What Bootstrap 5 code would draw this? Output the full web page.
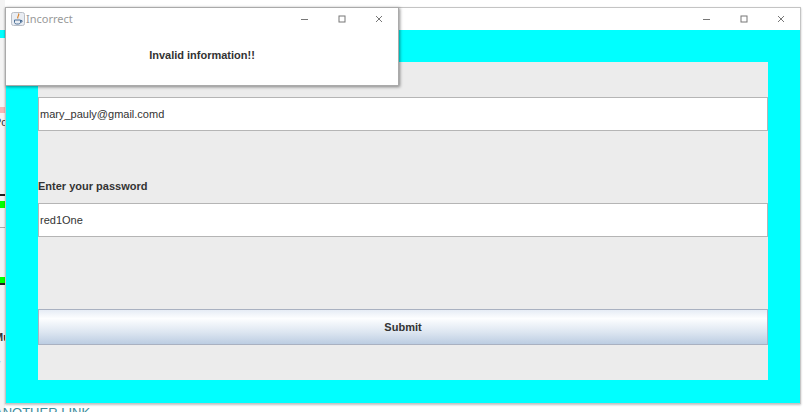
<!DOCTYPE html>
<html lang="en">
<head>
    <meta charset="UTF-8">
    <meta name="viewport" content="width=device-width, initial-scale=1.0">
    <title>Incorrect</title>
    <link rel="stylesheet" href="https://cdn.jsdelivr.net/npm/bootstrap@5.3.0/dist/css/bootstrap.min.css">
    <style>
        html, body {
            height: 412px;
            overflow: hidden;
        }
        body {
            position: relative;
            background: #fff;
            font-family: "Liberation Sans", Arial, sans-serif;
            color: #333;
        }
        /* bits of the page behind the windows */
        .behind {
            width: 5px;
            height: 412px;
            background: #f4f4f4;
        }
        .behind div { position: absolute; left: 0; width: 5px; }
        .behind .cyan { top: 30px; height: 8px; background: #0ff; }
        .behind .pink { top: 107px; height: 6px; background: #f5b5b5; }
        .behind .black { height: 2px; background: #222; }
        .behind .green { height: 7px; background: #0f0; }
        .behind .grey { height: 1px; background: #aaa; }
        .behind-text {
            position: absolute;
            left: -6px;
            font-size: 11px;
            line-height: 14px;
            white-space: nowrap;
        }
        .other-link {
            position: absolute;
            left: -6px;
            top: 405px;
            font-size: 13px;
            line-height: 15px;
            color: #3a8a9a;
            white-space: nowrap;
        }
        .win {
            position: absolute;
            background: #fff;
            border: 1px solid #c4c4c4;
            box-shadow: 0 1px 2px rgba(0, 0, 0, .25);
        }
        .win-main {
            left: 5px;
            top: 7px;
            width: 796px;
            height: 397px;
        }
        .win-dialog {
            left: 5px;
            top: 7px;
            width: 394px;
            height: 79px;
            border-color: #aaa;
            box-shadow: 1px 1px 3px rgba(0, 0, 0, .45);
        }
        .titlebar {
            height: 22px;
        }
        .win-title {
            font-family: "Noto Sans", sans-serif;
            font-size: 11px;
            color: #999;
            margin-left: 1px;
        }
        .win-btns svg {
            display: block;
            width: 8px;
            height: 8px;
            stroke: #777;
            fill: none;
        }
        .win-btns { gap: 29px; }
        .win-main .win-btns { padding-right: 15px; }
        .win-dialog .win-btns { padding-right: 15px; }
        .java-icon {
            width: 14px;
            height: 14px;
            margin-left: 5px;
        }
        .cyan-area {
            height: 373px;
            background: #0ff;
            padding: 32px 32px 23px;
        }
        .panel {
            height: 318px;
            background: #ececec;
            padding-top: 35px;
        }
        .field {
            height: 34px;
            margin-right: 1px;
            background: #fff;
            border: 1px solid #b5b5b5;
            border-radius: 0;
            padding: 0 1px;
            font-size: 11px;
            color: #333;
            box-shadow: none;
        }
        .pw-label {
            margin-top: 49px;
            margin-bottom: 10px;
            font-size: 11px;
            font-weight: 700;
            line-height: 13px;
            color: #333;
        }
        .submit {
            width: 100%;
            height: 36px;
            margin-top: 72px;
            padding: 0;
            border: 1px solid #a9b1c1;
            border-radius: 0;
            font-size: 11px;
            font-weight: 700;
            color: #333;
            background: linear-gradient(#e6ecf5, #fdfeff 25%, #dde6f1 65%, #bccde2);
        }
        .msg {
            font-size: 11px;
            font-weight: 700;
            color: #333;
            padding-top: 17px;
        }
    </style>
</head>
<body>
    <div class="behind">
        <div class="cyan"></div>
        <div class="pink"></div>
        <div class="black" style="top:194px"></div>
        <div class="green" style="top:201px"></div>
        <div class="grey" style="top:227px"></div>
        <div class="green" style="top:277px"></div>
        <div class="black" style="top:283px"></div>
    </div>
    <div class="behind-text" style="top:115px">Pol</div>
    <div class="behind-text fw-bold" style="top:330px">Mu</div>
    <div class="behind-text" style="top:358px">//</div>
    <div class="other-link">ANOTHER LINK</div>

    <div class="win win-main">
        <div class="titlebar d-flex align-items-center justify-content-end">
            <div class="win-btns d-flex">
                <svg viewBox="0 0 8 8"><path d="M0 4.5h7"/></svg>
                <svg viewBox="0 0 8 8"><rect x="1" y="1" width="6" height="6"/></svg>
                <svg viewBox="0 0 8 8"><path d="M1 1l6 6M7 1l-6 6"/></svg>
            </div>
        </div>
        <div class="cyan-area">
            <div class="panel">
                <input class="form-control field" type="text" value="mary_pauly@gmail.comd">
                <div class="pw-label">Enter your password</div>
                <input class="form-control field" type="text" value="red1One">
                <button class="btn submit" type="button">Submit</button>
            </div>
        </div>
    </div>

    <div class="win win-dialog">
        <div class="titlebar d-flex align-items-center justify-content-between">
            <div class="d-flex align-items-center">
                <svg class="java-icon" viewBox="0 0 14 14">
                    <rect x=".5" y=".5" width="13" height="13" rx="2" fill="#e9edf3" stroke="#b9bec6"/>
                    <path d="M7.5 1.5c1.5 2-2 3-.5 5" fill="none" stroke="#d9822b" stroke-width="1.2"/>
                    <path d="M3.5 8h6v2.500a2 2 0 0 1-2 1.500h-2a2 2 0 0 1-2-1.500zM9.500 8.500h1.500v1.500h-1.500" fill="none" stroke="#4a6f96"/>
                </svg>
                <span class="win-title">Incorrect</span>
            </div>
            <div class="win-btns d-flex">
                <svg viewBox="0 0 8 8"><path d="M0 4.500h7"/></svg>
                <svg viewBox="0 0 8 8"><rect x="1" y="1" width="6" height="6"/></svg>
                <svg viewBox="0 0 8 8"><path d="M1 1l6 6M7 1l-6 6"/></svg>
            </div>
        </div>
        <div class="msg text-center">Invalid information!!</div>
    </div>

    <script src="https://cdn.jsdelivr.net/npm/bootstrap@5.3.0/dist/js/bootstrap.bundle.min.js"></script>
</body>
</html>
